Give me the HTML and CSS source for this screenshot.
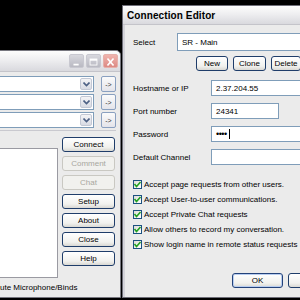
FILE: index.html
```html
<!DOCTYPE html>
<html lang="en">
<head>
    <meta charset="UTF-8">
    <meta name="viewport" content="width=device-width, initial-scale=1.0">
    <title>Connection Editor</title>
    <link rel="stylesheet" href="styles.css">
</head>
<body>
    <div class="desk">
        <!-- main client window, mostly off screen to the left -->
        <div class="win leftWin">
            <div class="titleBar">
                <span class="tbBtn">
                    <svg width="15" height="14" viewBox="0 0 15 14"><rect x="4" y="9" width="6" height="2" fill="#fff"/></svg>
                </span>
                <span class="tbBtn">
                    <svg width="15" height="14" viewBox="0 0 15 14"><rect x="3.5" y="3.5" width="8" height="7" fill="none" stroke="#fff" stroke-width="1"/><rect x="3.5" y="3.5" width="8" height="2" fill="#fff"/></svg>
                </span>
                <span class="tbBtn tbClose">
                    <svg width="15" height="14" viewBox="0 0 15 14"><path d="M4 3 L11 11 M11 3 L4 11" stroke="#fff" stroke-width="2"/></svg>
                </span>
            </div>
            <div class="leftBody">
                <div class="comboList">
                    <div class="comboRow">
                        <div class="combo"><span class="drop"><svg width="7" height="5" viewBox="0 0 7 5"><path d="M0.5 0.5 L3.5 3.5 L6.5 0.5" fill="none" stroke="#4d6185" stroke-width="1.6"/></svg></span></div>
                        <span class="goBtn">-&gt;</span>
                    </div>
                    <div class="comboRow">
                        <div class="combo"><span class="drop"><svg width="7" height="5" viewBox="0 0 7 5"><path d="M0.5 0.5 L3.5 3.5 L6.5 0.5" fill="none" stroke="#4d6185" stroke-width="1.6"/></svg></span></div>
                        <span class="goBtn">-&gt;</span>
                    </div>
                    <div class="comboRow">
                        <div class="combo"><span class="drop"><svg width="7" height="5" viewBox="0 0 7 5"><path d="M0.5 0.5 L3.5 3.5 L6.5 0.5" fill="none" stroke="#4d6185" stroke-width="1.6"/></svg></span></div>
                        <span class="goBtn">-&gt;</span>
                    </div>
                </div>
                <div class="group">
                    <div class="listBox"></div>
                    <div class="cmds">
                        <span class="btn">Connect</span>
                        <span class="btn off">Comment</span>
                        <span class="btn off">Chat</span>
                        <span class="btn">Setup</span>
                        <span class="btn">About</span>
                        <span class="btn">Close</span>
                        <span class="btn">Help</span>
                    </div>
                </div>
                <div class="mute">ute Microphone/Binds</div>
            </div>
        </div>

        <!-- connection editor dialog -->
        <div class="win rightWin">
            <div class="titleBar dlgTitle">Connection Editor</div>
            <div class="dlgBody">
                <div class="selectRow">
                    <span class="lbl selLbl">Select</span>
                    <div class="field selField">SR - Main</div>
                </div>
                <div class="editBtns">
                    <span class="btn newBtn">New</span>
                    <span class="btn cloneBtn">Clone</span>
                    <span class="btn delBtn">Delete</span>
                </div>
                <div class="fields">
                    <span class="lbl">Hostname or IP</span>
                    <div class="field">2.37.204.55</div>
                    <span class="lbl">Port number</span>
                    <div class="field portField">24341</div>
                    <span class="lbl">Password</span>
                    <div class="field"><span class="dots">&bull;&bull;&bull;&bull;</span><span class="caret"></span></div>
                    <span class="lbl">Default Channel</span>
                    <div class="field"></div>
                </div>
                <ul class="checks">
                    <li><span class="chk"><svg width="9" height="9" viewBox="0 0 9 9"><path d="M1.5 4 L3.5 6.5 L7.5 2" fill="none" stroke="#21a121" stroke-width="1.6"/></svg></span>Accept page requests from other users.</li>
                    <li><span class="chk"><svg width="9" height="9" viewBox="0 0 9 9"><path d="M1.5 4 L3.5 6.5 L7.5 2" fill="none" stroke="#21a121" stroke-width="1.6"/></svg></span>Accept User-to-user communications.</li>
                    <li><span class="chk"><svg width="9" height="9" viewBox="0 0 9 9"><path d="M1.5 4 L3.5 6.5 L7.5 2" fill="none" stroke="#21a121" stroke-width="1.6"/></svg></span>Accept Private Chat requests</li>
                    <li><span class="chk"><svg width="9" height="9" viewBox="0 0 9 9"><path d="M1.5 4 L3.5 6.5 L7.5 2" fill="none" stroke="#21a121" stroke-width="1.6"/></svg></span>Allow others to record my conversation.</li>
                    <li><span class="chk"><svg width="9" height="9" viewBox="0 0 9 9"><path d="M1.5 4 L3.5 6.5 L7.5 2" fill="none" stroke="#21a121" stroke-width="1.6"/></svg></span>Show login name in remote status requests</li>
                </ul>
                <div class="dlgBtns">
                    <span class="btn okBtn">OK</span>
                    <span class="btn cancelBtn"></span>
                </div>
            </div>
        </div>
    </div>
</body>
</html>
```

FILE: styles.css
```css
*{margin: 0; padding: 0; box-sizing: border-box; list-style: none; font-family: "Liberation Sans", Arial, sans-serif;}
body{background-color: #000; width: 300px; height: 300px; overflow: hidden;}
.desk{position: relative; width: 300px; height: 300px; overflow: hidden; font-size: 8px; color: #000;}

/* windows sit on the desktop at their own place */
.win{position: absolute; background-color: #ebebeb; border: 1px solid #77777f; display: flex; flex-direction: column;}
.titleBar{height: 21px; background: linear-gradient(#fdfdfd, #eeeef0 45%, #d9d9de); border-bottom: 1px solid #c4c4ca; display: flex; align-items: center; flex-shrink: 0;}

.leftWin{left: -4px; top: 50px; width: 125px; height: 248px; border-radius: 0 5px 0 0;}
.leftWin .titleBar{justify-content: flex-end; gap: 2px; padding-right: 2px; border-radius: 0 5px 0 0;}
.tbBtn{width: 15px; height: 14px; border-radius: 2px; background: linear-gradient(#d8d8de, #b9b9c2); border: 1px solid #c8c8d0; display: flex;}
.tbClose{background: linear-gradient(#f0b4ae, #dc8a84); border-color: #e6b0aa;}

.leftBody{display: flex; flex-direction: column; flex: 1;}
.comboList{display: flex; flex-direction: column; gap: 2px; padding-top: 4px;}
.comboRow{display: flex; align-items: center; height: 16px;}
.combo{width: 97px; height: 16px; background-color: #fff; border: 1px solid #7f9db9; display: flex; justify-content: flex-end; align-items: center; padding-right: 1px;}
.drop{width: 12px; height: 12px; border-radius: 2px; background: linear-gradient(#f4f4f6, #d8dbe4); border: 1px solid #c3c8d4; display: flex; align-items: center; justify-content: center;}
.goBtn{margin-left: 7px; width: 15px; height: 16px; border: 1px solid #8aa0c0; border-radius: 2px; background: linear-gradient(#fbfbfb, #e4e4ea); font-size: 7px; color: #333; display: flex; align-items: center; justify-content: center;}

.group{display: flex; align-items: flex-start; border-top: 1px solid #c9c9cf; margin-top: 2px; margin-right: 4px; flex: 1;}
.listBox{width: 61px; height: 130px; margin-top: 17px; background-color: #fff; border: 1px solid #9a9aa2; border-left: none;}
.cmds{display: flex; flex-direction: column; gap: 4px; margin-top: 6px; margin-left: 4px;}

.btn{height: 15px; flex-shrink: 0; border: 1px solid #1f3d6a; border-radius: 3px; background: linear-gradient(#fff, #f1f1ee 70%, #d9d8d3); display: flex; align-items: center; justify-content: center; font-size: 8px;}
.cmds .btn{width: 53px;}
.btn.off{border-color: #c9c8c2; background: #f1f1ee; color: #a8a79e;}

.mute{padding: 0 0 5px 3px; font-size: 8px;}

.rightWin{left: 122px; top: 5px; width: 200px; height: 293px; border-color: #6e6e78; padding: 0 0 0 2px; background-color: #d4d4da;}
.dlgTitle{height: 19px; padding-left: 4px; font-weight: bold; font-size: 10px; margin-left: -2px; letter-spacing: 0.1px;}
.dlgBody{flex: 1; background-color: #ebebeb; display: flex; flex-direction: column; padding: 8px 0 9px 8px;}

.lbl{font-size: 8px; display: flex; align-items: center;}
.field{height: 17px; background-color: #fff; border: 1px solid #7f9db9; display: flex; align-items: center; padding-left: 4px; font-size: 8px;}

.selectRow{display: flex; height: 18px;}
.selLbl{width: 44px;}
.selField{flex: 1; height: 18px;}

.editBtns{display: flex; gap: 5px; margin-top: 5px; padding-left: 63px;}
.newBtn{width: 32px;}
.cloneBtn{width: 33px;}
.delBtn{width: 30px;}

.fields{display: grid; grid-template-columns: 78px 1fr; grid-auto-rows: 16px; row-gap: 7px; margin-top: 9px;}
.fields .field{height: 16px;}
.portField{width: 68px;}
.dots{font-size: 9px; letter-spacing: -0.5px;}
.caret{width: 1px; height: 10px; background-color: #000; margin-left: 2px;}

.checks{margin-top: 12px; display: flex; flex-direction: column;}
.checks li{height: 15px; display: flex; align-items: center; font-size: 8px; white-space: nowrap;}
.chk{width: 9px; height: 9px; border: 1px solid #1c5180; background: linear-gradient(135deg, #dcdcd7, #fff); margin-right: 2px; display: flex; align-items: center; justify-content: center;}
.chk svg{margin: -1px;}

.dlgBtns{margin-top: auto; display: flex; gap: 5px; padding-left: 99px;}
.okBtn{width: 51px; border-color: #23427a; box-shadow: inset 0 0 0 1px #b8cdf0;}
.cancelBtn{width: 51px;}
```
